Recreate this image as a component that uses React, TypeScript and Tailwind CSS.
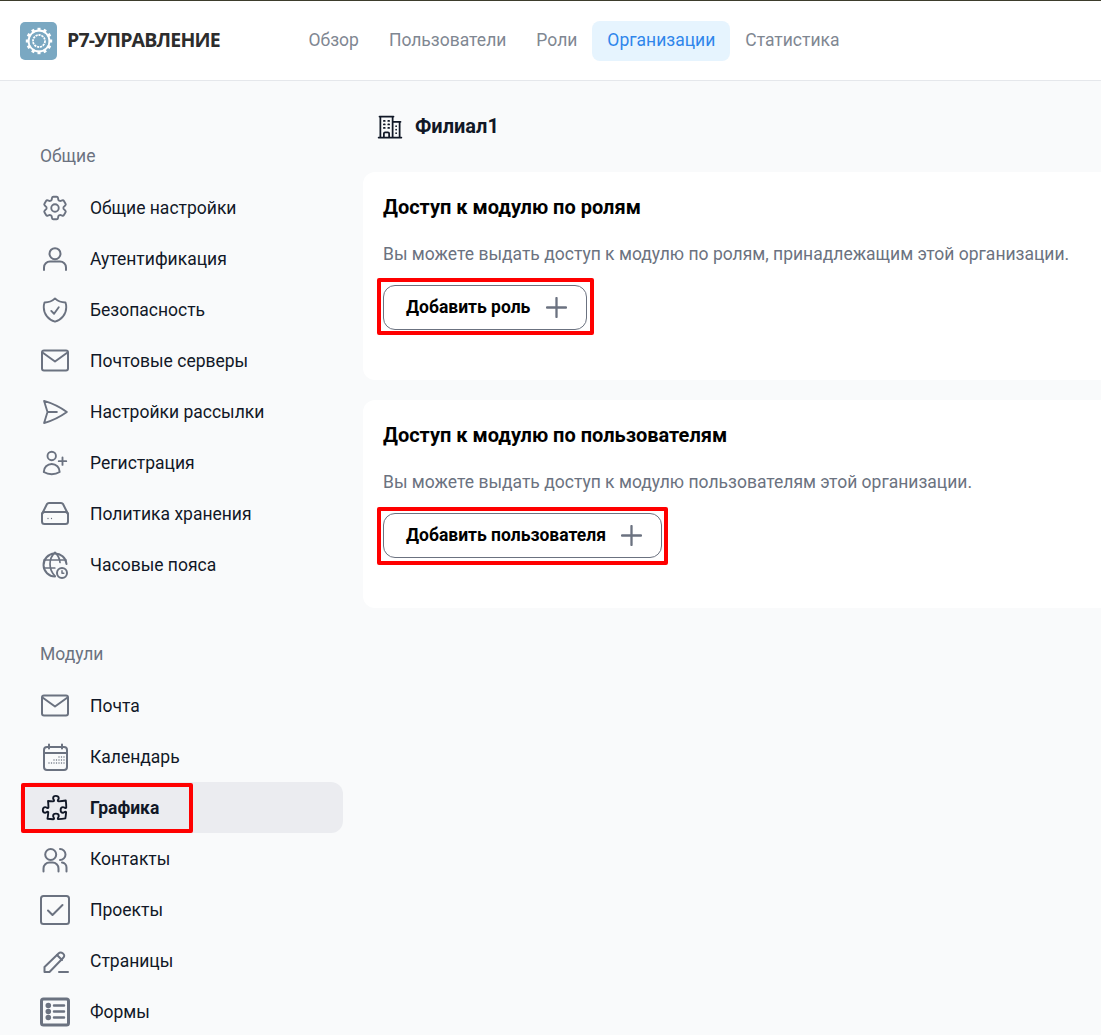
import type { ReactNode } from "react";
import {
  HiOutlineBuildingOffice2,
  HiOutlineCog6Tooth,
  HiOutlinePaperAirplane,
  HiOutlinePuzzlePiece,
  HiOutlineShieldCheck,
  HiOutlineUserPlus,
} from "react-icons/hi2";

const ROBOTO = "font-['Roboto',sans-serif]";

function Svg({ children }: { children: ReactNode }) {
  return (
    <svg width="30" height="30" viewBox="0 0 30 30" fill="none" stroke="currentColor" strokeWidth="2" strokeLinecap="round" strokeLinejoin="round">
      {children}
    </svg>
  );
}

const UserIcon = () => (
  <Svg>
    <circle cx="15" cy="9.700" r="5.500" />
    <path d="M4 26v-2.500a6 6 0 0 1 6-6h10a6 6 0 0 1 6 6V26" />
  </Svg>
);

const UsersIcon = () => (
  <Svg>
    <circle cx="10.700" cy="10.500" r="5.500" />
    <path d="M20 5a5.500 5.500 0 0 1 0 11" />
    <path d="M3.500 27.500v-3a6 6 0 0 1 6-6h3a6 6 0 0 1 6 6v3" />
    <path d="M22 18.500a5 5 0 0 1 4.500 5v4" />
  </Svg>
);

const MailIcon = () => (
  <Svg>
    <rect x="2" y="4.500" width="26" height="20" rx="2" />
    <path d="M2.500 6.500 15 15.500l12.500-9" />
  </Svg>
);

const DriveIcon = () => (
  <Svg>
    <path d="M2 15 7 5q.5-1 2-1h12q1.500 0 2 1l5 10" />
    <rect x="2" y="13" width="26" height="12" rx="2.500" />
    <path d="M8 19.500h.01M11.500 19.500h.01" strokeWidth="1.300" />
  </Svg>
);

const GlobeClockIcon = () => (
  <Svg>
    <path d="M15 26.500A11.500 11.500 0 1 1 26.500 14" />
    <path d="M15 2.500c-3.500 3-5 7-5 11.500s1.500 8.500 5 12M15 2.500c3 2.500 4.700 6 5 10M4 10h22M3.800 18h11" strokeWidth="1.700" />
    <circle cx="22" cy="23" r="5" />
    <path d="M22 20.800V23.200h1.800" strokeWidth="1.500" />
  </Svg>
);

const CalendarIcon = () => (
  <Svg>
    <rect x="4" y="5" width="23" height="23" rx="3" />
    <path d="M9 2.500v4M22 2.500v4M4 11h23" />
    <path
      d="M19 15h.01M21.500 15h.01M24 15h.01M14 18h.01M16.500 18h.01M19 18h.01M21.500 18h.01M24 18h.01M9 21h.01M11.500 21h.01M14 21h.01M16.500 21h.01M19 21h.01M21.500 21h.01M24 21h.01"
      strokeWidth="1.400"
    />
  </Svg>
);

const CheckboxIcon = () => (
  <Svg>
    <rect x="1" y="1" width="28" height="28" rx="2.500" />
    <path d="m8 15.500 4.500 4.500 10-10" />
  </Svg>
);

const PencilIcon = () => (
  <Svg>
    <path d="M4.500 26v-5L18.500 7.500q2-2 4.500 0t0 4.500L9.500 26z" />
    <path d="m17 9 5 5M19 26h9" />
  </Svg>
);

const FormsIcon = () => (
  <Svg>
    <rect x="1.500" y="2" width="27" height="26" rx="2" strokeWidth="3" />
    <circle cx="8.300" cy="8.500" r="1.800" fill="currentColor" />
    <circle cx="8.300" cy="14.500" r="1.800" fill="currentColor" />
    <circle cx="8.300" cy="20.500" r="1.800" fill="currentColor" />
    <path d="M14 8.500h10M14 14.500h10M14 20.500h10" strokeWidth="2.500" />
  </Svg>
);

const PlusIcon = () => (
  <svg width="21" height="21" viewBox="0 0 21 21" fill="none" stroke="#6b7280" strokeWidth="2.300" strokeLinecap="round">
    <path d="M10.500 1v19M1 10.500h19" />
  </svg>
);

const GENERAL_ITEMS = [
  { label: "Общие настройки", icon: <HiOutlineCog6Tooth size={30} /> },
  { label: "Аутентификация", icon: <UserIcon /> },
  { label: "Безопасность", icon: <HiOutlineShieldCheck size={30} /> },
  { label: "Почтовые серверы", icon: <MailIcon /> },
  { label: "Настройки рассылки", icon: <HiOutlinePaperAirplane size={30} /> },
  { label: "Регистрация", icon: <HiOutlineUserPlus size={30} /> },
  { label: "Политика хранения", icon: <DriveIcon /> },
  { label: "Часовые пояса", icon: <GlobeClockIcon /> },
];

const MODULE_ITEMS = [
  { label: "Почта", icon: <MailIcon /> },
  { label: "Календарь", icon: <CalendarIcon /> },
  { label: "Графика", icon: <HiOutlinePuzzlePiece size={30} />, active: true },
  { label: "Контакты", icon: <UsersIcon /> },
  { label: "Проекты", icon: <CheckboxIcon /> },
  { label: "Страницы", icon: <PencilIcon /> },
  { label: "Формы", icon: <FormsIcon /> },
];

const TABS = ["Обзор", "Пользователи", "Роли", "Организации", "Статистика"];

function LogoGear() {
  const teeth = Array.from({ length: 12 }, (_, i) => i * 30);
  return (
    <svg width="28" height="28" viewBox="0 0 28 28" fill="none" stroke="#fff">
      {teeth.map((angle) => (
        <rect key={angle} x="12.500" y="0.800" width="3" height="3.500" fill="#fff" stroke="none" transform={`rotate(${angle} 14 14)`} />
      ))}
      <circle cx="14" cy="14" r="10.500" strokeWidth="1.800" />
      <circle cx="14" cy="14" r="6" strokeWidth="1.800" strokeDasharray="2.200 0.800" />
    </svg>
  );
}

function SidebarItem({ label, icon, active }: { label: string; icon: ReactNode; active?: boolean }) {
  return (
    <div className={`relative flex h-[51px] items-center gap-5 rounded-xl px-5 text-[#111827] ${active ? "bg-[#ebecf0] font-bold" : ""}`}>
      <span className={`flex w-[30px] justify-center ${active ? "text-[#111827]" : "text-[#6b7280]"}`}>{icon}</span>
      <span className="pt-[2px] text-[17.5px]">{label}</span>
      {active && <span className="absolute top-px left-px h-[50px] w-[172px] rounded-[2px] border-4 border-[#ff0000]" />}
    </div>
  );
}

function SidebarSection({ title, items }: { title: string; items: typeof MODULE_ITEMS }) {
  return (
    <div>
      <div className="mb-[14px] pt-px pl-5 text-[17.5px] leading-6 text-[#6b7280]">{title}</div>
      {items.map((item) => (
        <SidebarItem key={item.label} {...item} />
      ))}
    </div>
  );
}

function AccessCard({ title, text, button, frame }: { title: string; text: string; button: string; frame: string }) {
  return (
    <section className="h-[208px] rounded-l-xl bg-white pt-[23px] pl-5">
      <h2 className="text-xl leading-6 font-bold text-black">{title}</h2>
      <p className="mt-[23px] text-[17.5px] leading-6 text-[#6b7280]">{text}</p>
      <div className="relative mt-[19px] inline-block">
        <button className="flex h-[45px] items-center gap-[15.5px] rounded-xl border border-[#6b7280] bg-white pr-[19px] pl-[22px] text-[17.5px] font-bold text-black">
          {button}
          <PlusIcon />
        </button>
        <span className={`absolute rounded-[2px] border-4 border-[#ff0000] ${frame}`} />
      </div>
    </section>
  );
}

export default function App() {
  return (
    <div className={`flex h-[1035px] flex-col overflow-hidden bg-[#f9fafb] ${ROBOTO}`}>
      <header className="flex h-[81px] shrink-0 items-center border-t border-b border-t-[#3d3d2c] border-b-[#e5e7eb] bg-white pl-5">
        <div className="flex h-[38px] w-[37px] items-center justify-center rounded-[5px] bg-[#7aa8c2]">
          <LogoGear />
        </div>
        <span className="ml-[10px] w-[226.5px] pb-[2px] font-['Open_Sans',sans-serif] text-[19.5px] font-bold tracking-[-0.8px] text-[#2d2d2d]">Р7-УПРАВЛЕНИЕ</span>
        <nav className="flex items-center">
          {TABS.map((tab) => (
            <a
              key={tab}
              className={`flex h-10 items-center rounded-lg px-[15px] text-[17.5px] ${tab === "Организации" ? "bg-[#e6f4fe] text-[#2f86eb]" : "text-[#7f8792]"}`}
            >
              {tab}
            </a>
          ))}
        </nav>
      </header>
      <div className="flex min-h-0 flex-1">
        <aside className="flex w-[363px] shrink-0 flex-col gap-[51px] pt-[62px] pr-5 pl-5">
          <SidebarSection title="Общие" items={GENERAL_ITEMS} />
          <SidebarSection title="Модули" items={MODULE_ITEMS} />
        </aside>
        <main className="flex min-w-0 flex-1 flex-col gap-5 pt-[31px]">
          <div className="flex h-[30px] items-center gap-[11px] pl-[13px] text-[#111827]">
            <HiOutlineBuildingOffice2 size={28} />
            <span className="pb-[2px] text-xl font-bold">Филиал1</span>
          </div>
          <div className="mt-[10px] flex flex-col gap-5">
            <AccessCard
              title="Доступ к модулю по ролям"
              text="Вы можете выдать доступ к модулю по ролям, принадлежащим этой организации."
              button="Добавить роль"
              frame="-top-[7px] -right-[7px] -bottom-[5px] -left-[6px]"
            />
            <AccessCard
              title="Доступ к модулю по пользователям"
              text="Вы можете выдать доступ к модулю пользователям этой организации."
              button="Добавить пользователя"
              frame="-top-[6px] -right-[6px] -bottom-[7px] -left-[6px]"
            />
          </div>
        </main>
      </div>
    </div>
  );
}
